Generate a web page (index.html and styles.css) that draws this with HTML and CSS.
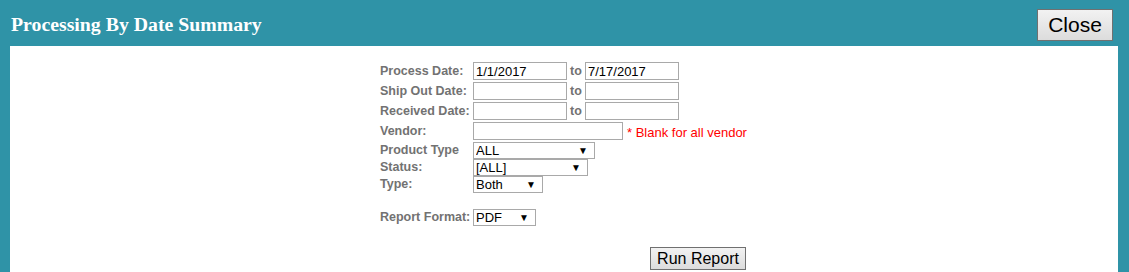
FILE: index.html
```html
<!DOCTYPE html>
<html lang="en">
<head>
    <meta charset="UTF-8">
    <title>Processing By Date Summary</title>
    <link rel="stylesheet" href="styles.css">
</head>
<body>
    <div class="dialog">
        <div class="dialog-header">
            <h2 class="dialog-title">Processing By Date Summary</h2>
            <button type="button" class="close-btn">Close</button>
        </div>
        <div class="dialog-body">
            <form class="report-form">
                <label class="field-label">Process Date:</label>
                <div class="field">
                    <input type="text" class="date-input" value="1/1/2017">
                    <span class="to">to</span>
                    <input type="text" class="date-input" value="7/17/2017">
                </div>

                <label class="field-label">Ship Out Date:</label>
                <div class="field">
                    <input type="text" class="date-input">
                    <span class="to">to</span>
                    <input type="text" class="date-input">
                </div>

                <label class="field-label">Received Date:</label>
                <div class="field">
                    <input type="text" class="date-input">
                    <span class="to">to</span>
                    <input type="text" class="date-input">
                </div>

                <label class="field-label">Vendor:</label>
                <div class="field">
                    <input type="text" class="vendor-input">
                    <span class="hint">* Blank for all vendor</span>
                </div>

                <label class="field-label small">Product Type</label>
                <div class="field small">
                    <span class="select-wrap product"><select><option>ALL</option></select></span>
                </div>

                <label class="field-label small">Status:</label>
                <div class="field small">
                    <span class="select-wrap status"><select><option>[ALL]</option></select></span>
                </div>

                <label class="field-label small">Type:</label>
                <div class="field small">
                    <span class="select-wrap type"><select><option>Both</option></select></span>
                </div>

                <div class="spacer"></div>

                <label class="field-label small">Report Format:</label>
                <div class="field small">
                    <span class="select-wrap format"><select><option>PDF</option></select></span>
                </div>

                <div class="actions">
                    <button type="button" class="run-btn">Run Report</button>
                </div>
            </form>
        </div>
    </div>
</body>
</html>
```

FILE: styles.css
```css
body {
    margin: 0;
    padding: 0;
    background-color: #2f93a7;
    font-family: "Liberation Sans", Arial, sans-serif;
}

.dialog {
    height: 272px;
    display: flex;
    flex-direction: column;
}

.dialog-header {
    height: 46px;
    display: flex;
    align-items: flex-start;
    justify-content: space-between;
    padding: 0 16px 0 11px;
    box-sizing: border-box;
}

.dialog-title {
    font-family: "Liberation Serif", "Times New Roman", serif;
    font-size: 19.8px;
    font-weight: bold;
    color: #fff;
    margin: 13px 0 0;
}

.close-btn {
    margin-top: 9px;
    width: 76px;
    height: 32px;
    font-family: "Liberation Sans", Arial, sans-serif;
    font-size: 21px;
    color: #000;
    border: 1px solid #707070;
    border-radius: 0;
    background: linear-gradient(#f2f2f2, #dcdcdc);
    padding: 0;
}

.dialog-body {
    flex: 1;
    background-color: #fff;
    margin: 0 11px 0 10px;
    padding-top: 16px;
}

.report-form {
    display: grid;
    grid-template-columns: 95px 277px;
    justify-content: center;
    align-items: start;
}

.field-label {
    font-size: 12.5px;
    font-weight: bold;
    color: #727272;
    padding-left: 2px;
    height: 20px;
    line-height: 18px;
    white-space: nowrap;
}

.field-label.small {
    height: 17px;
    line-height: 16px;
}

.field {
    display: flex;
    align-items: center;
    height: 20px;
}

.field.small {
    height: 17px;
}

input {
    height: 18px;
    box-sizing: border-box;
    border: 1px solid #a9a9a9;
    padding: 0 2px;
    margin: 0;
    font-family: "Liberation Sans", Arial, sans-serif;
    font-size: 13px;
    color: #000;
    align-self: flex-start;
}

.date-input {
    width: 94px;
}

.vendor-input {
    width: 150px;
}

.to {
    font-size: 12.5px;
    font-weight: bold;
    color: #727272;
    padding: 0 3px 2px;
    width: 12px;
    box-sizing: content-box;
}

.hint {
    font-size: 13px;
    color: #f00;
    margin-left: 4px;
}

.select-wrap {
    position: relative;
    display: block;
    height: 17px;
}

.select-wrap select {
    display: block;
    appearance: none;
    -webkit-appearance: none;
    height: 17px;
    width: 100%;
    box-sizing: border-box;
    border: 1px solid #a9a9a9;
    border-radius: 0;
    background: #fff;
    padding: 0 2px;
    margin: 0;
    font-family: "Liberation Sans", Arial, sans-serif;
    font-size: 13px;
    color: #000;
    outline: none;
}

.select-wrap::after {
    content: "\25BC";
    position: absolute;
    right: 7px;
    top: 2px;
    font-size: 10px;
    line-height: 13px;
    color: #000;
    pointer-events: none;
}

.select-wrap.product { width: 122px; }
.select-wrap.status { width: 115px; }
.select-wrap.type { width: 70px; }
.select-wrap.format { width: 63px; }

.spacer {
    grid-column: 1 / 3;
    height: 16px;
}

.actions {
    grid-column: 1 / 3;
    padding: 21px 0 0 272px;
}

.run-btn {
    width: 96px;
    height: 23px;
    font-family: "Liberation Sans", Arial, sans-serif;
    font-size: 16px;
    color: #000;
    border: 1px solid #707070;
    border-radius: 0;
    background: linear-gradient(#f2f2f2, #dcdcdc);
    padding: 0;
}
```
